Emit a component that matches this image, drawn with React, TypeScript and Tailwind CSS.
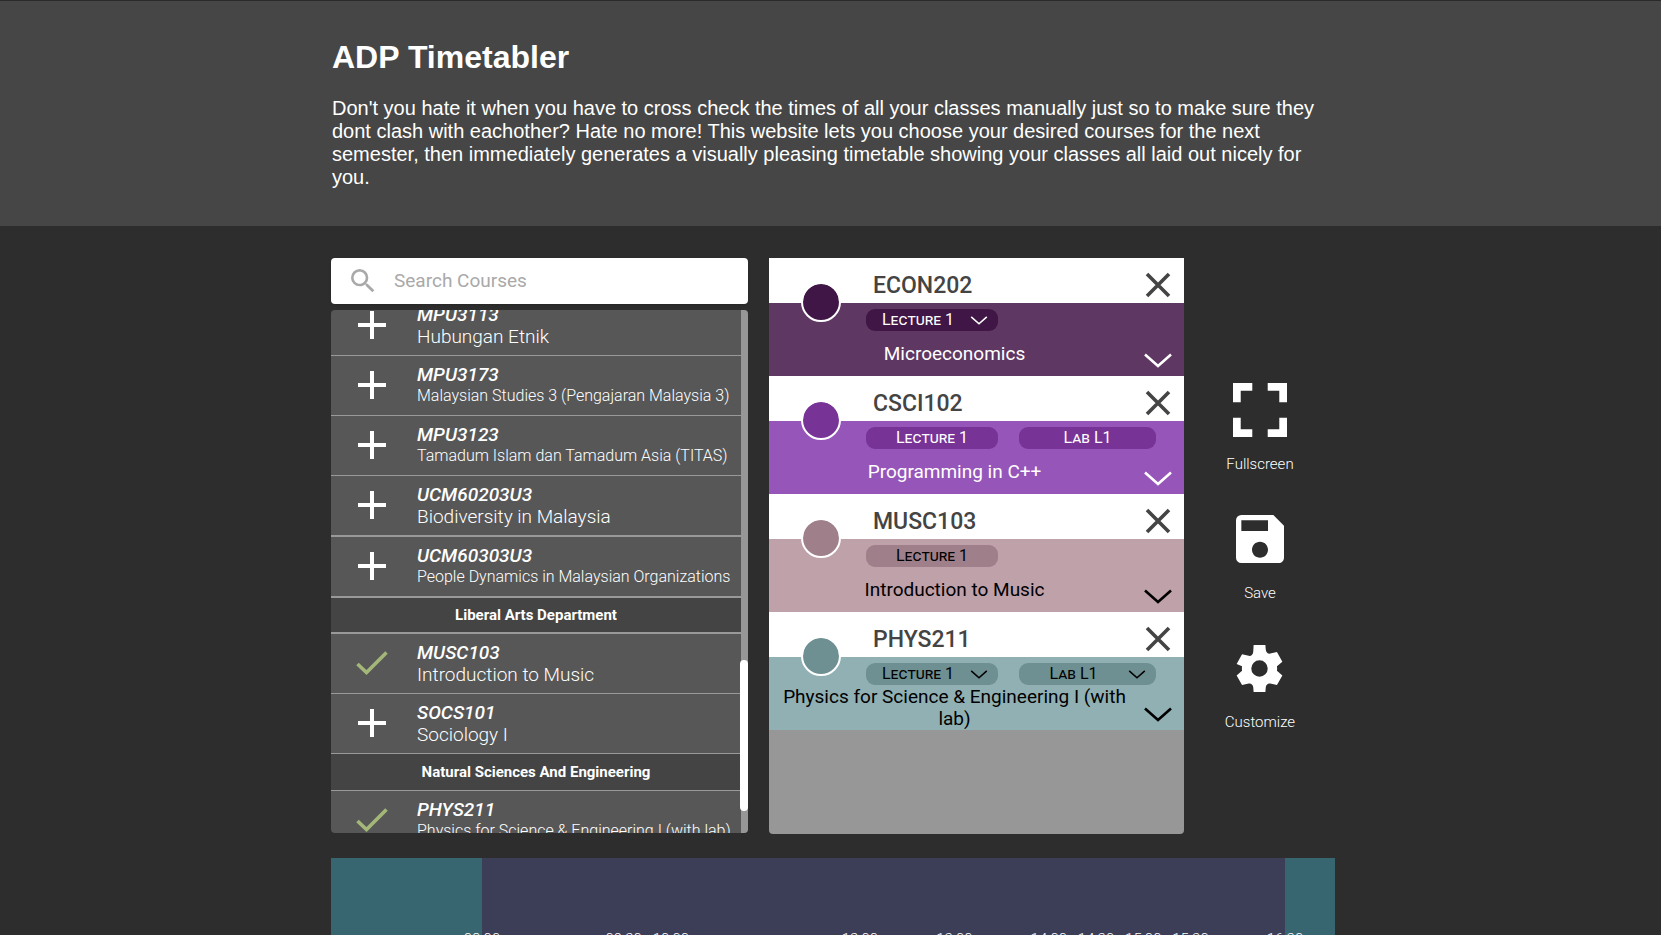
import type { ReactNode } from 'react';

type Course = { code: string; name: string; added?: boolean; small?: boolean; thick?: boolean };
type Entry = Course | { department: string; thick?: boolean };

const entries: Entry[] = [
  { code: 'MPU3113', name: 'Hubungan Etnik' },
  { code: 'MPU3173', name: 'Malaysian Studies 3 (Pengajaran Malaysia 3)', small: true },
  { code: 'MPU3123', name: 'Tamadum Islam dan Tamadum Asia (TITAS)', small: true },
  { code: 'UCM60203U3', name: 'Biodiversity in Malaysia', thick: true },
  { code: 'UCM60303U3', name: 'People Dynamics in Malaysian Organizations', small: true, thick: true },
  { department: 'Liberal Arts Department', thick: true },
  { code: 'MUSC103', name: 'Introduction to Music', added: true },
  { code: 'SOCS101', name: 'Sociology I' },
  { department: 'Natural Sciences And Engineering' },
  { code: 'PHYS211', name: 'Physics for Science & Engineering I (with lab)', added: true, small: true },
];

type Section = { label: string; menu?: boolean };
type Selected = {
  code: string;
  name: string;
  body: string;
  accent: string;
  text: string;
  sections: Section[];
};

const selected: Selected[] = [
  {
    code: 'ECON202',
    name: 'Microeconomics',
    body: 'bg-[#5f3763]',
    accent: 'bg-[#3f1645]',
    text: 'text-white',
    sections: [{ label: 'Lecture 1', menu: true }],
  },
  {
    code: 'CSCI102',
    name: 'Programming in C++',
    body: 'bg-[#9655b9]',
    accent: 'bg-[#773396]',
    text: 'text-white',
    sections: [{ label: 'Lecture 1' }, { label: 'Lab L1' }],
  },
  {
    code: 'MUSC103',
    name: 'Introduction to Music',
    body: 'bg-[#bfa1aa]',
    accent: 'bg-[#9f808a]',
    text: 'text-black',
    sections: [{ label: 'Lecture 1' }],
  },
  {
    code: 'PHYS211',
    name: 'Physics for Science & Engineering I (with lab)',
    body: 'bg-[#90b0b4]',
    accent: 'bg-[#6f9092]',
    text: 'text-black',
    sections: [{ label: 'Lecture 1', menu: true }, { label: 'Lab L1', menu: true }],
  },
];

const times = [
  { label: '08:00', hour: 8 },
  { label: '09:30', hour: 9.5 },
  { label: '10:00', hour: 10 },
  { label: '12:00', hour: 12 },
  { label: '13:00', hour: 13 },
  { label: '14:00', hour: 14 },
  { label: '14:30', hour: 14.5 },
  { label: '15:00', hour: 15 },
  { label: '15:30', hour: 15.5 },
  { label: '16:30', hour: 16.5 },
];

function Plus() {
  return (
    <svg viewBox="0 0 28 28" className="size-7" aria-hidden="true">
      <path d="M14 0v28M0 14h28" stroke="white" strokeWidth="4" />
    </svg>
  );
}

function Check() {
  return (
    <svg viewBox="0 0 32 24" className="h-6 w-8" fill="none" aria-hidden="true">
      <path d="M1.5 13L10.5 21.5L30.5 1.5" stroke="#a3b878" strokeWidth="3.6" />
    </svg>
  );
}

function Chevron({ className }: { className: string }) {
  return (
    <svg viewBox="0 0 28 15" className={className} fill="none" aria-hidden="true">
      <path d="M1 1.5L14 13L27 1.5" stroke="currentColor" strokeWidth="2.6" />
    </svg>
  );
}

function CourseRow({ course }: { course: Course }) {
  return (
    <li className={`shrink-0 border-[#999] ${course.thick ? 'h-[61px] border-b-2' : 'h-[60px] border-b'}`}>
      <button type="button" className="flex h-full w-full text-left text-white">
        <span className="flex h-full w-[82px] shrink-0 items-center justify-center pb-0.5">
          {course.added ? <Check /> : <Plus />}
        </span>
        <span className="flex flex-col pt-2 pl-1 whitespace-nowrap">
          <span className="text-[19px] leading-[22px] font-medium italic">{course.code}</span>
          <span className={`font-light ${course.small ? 'text-[16px] leading-[19px]' : 'text-[19px] leading-[22px]'}`}>
            {course.name}
          </span>
        </span>
      </button>
    </li>
  );
}

function SelectedCard({ course }: { course: Selected }) {
  return (
    <article className="relative">
      <header className="flex h-[45px] items-center justify-between bg-white pt-2 pr-[13px] pl-[104px] text-[#444]">
        <h2 className="pt-0.5 text-[23px] leading-7 font-medium">{course.code}</h2>
        <button type="button" aria-label={`Remove ${course.code}`}>
          <svg viewBox="0 0 26 26" className="size-[26px]" aria-hidden="true">
            <path d="M2 2l22 22M24 2L2 24" stroke="currentColor" strokeWidth="3.6" />
          </svg>
        </button>
      </header>
      <button
        type="button"
        aria-label={`Colour of ${course.code}`}
        className={`absolute top-6 left-8 size-10 rounded-full border-2 border-white bg-clip-padding ${course.accent}`}
      />
      <div className={`flex h-[73px] flex-col pt-[6px] ${course.body} ${course.text}`}>
        <div className="flex gap-[21px] pl-[97px]">
          {course.sections.map((s, i) => (
            <button
              key={s.label}
              type="button"
              className={`flex h-[22px] items-center rounded-[9px] text-[16px] leading-[22px] ${i ? 'w-[137px]' : 'w-[132px]'} ${course.accent}`}
            >
              <span className="flex-1 text-center [font-variant:small-caps]">{s.label}</span>
              {s.menu && <Chevron className="mr-[10px] h-[9px] w-[18px]" />}
            </button>
          ))}
        </div>
        <div className="flex flex-1 items-center pr-3">
          <p className="flex-1 pr-3 pl-2 text-center text-[19px] leading-[22px]">{course.name}</p>
          <button type="button" aria-label={`Details of ${course.code}`} className="pt-[14px]">
            <Chevron className="h-[15px] w-7" />
          </button>
        </div>
      </div>
    </article>
  );
}

function Action({ label, children }: { label: string; children: ReactNode }) {
  return (
    <button type="button" className="flex h-[129px] flex-col items-center text-white">
      <span className="flex h-[54px] items-center">{children}</span>
      <span className="mt-[18px] text-[15px] leading-[18px] font-light">{label}</span>
    </button>
  );
}

export default function App() {
  return (
    <div className="flex h-screen flex-col overflow-hidden border-t border-[#2a2a2a] bg-[#2d2d2d] font-[Roboto,sans-serif]">
      <header className="shrink-0 bg-[#464646] pl-[5px] text-white">
        <div className="mx-auto max-w-[1004px] pt-9 pr-4 pb-[37px] pl-px font-['Liberation_Sans',Arial,sans-serif]">
          <h1 className="text-[32px] leading-10 font-bold">ADP Timetabler</h1>
          <p className="mt-5 text-[20px] leading-[23px]">
            Don't you hate it when you have to cross check the times of all your classes manually just so to make sure
            they dont clash with eachother? Hate no more! This website lets you choose your desired courses for the
            next semester, then immediately generates a visually pleasing timetable showing your classes all laid out
            nicely for you.
          </p>
        </div>
      </header>
      <main className="pl-[5px]">
        <div className="mx-auto max-w-[1004px] pt-8">
          <div className="flex">
            <section className="flex h-[575px] w-[417px] flex-col" aria-label="Courses">
              <label className="flex h-[46px] shrink-0 items-center rounded bg-white pl-5 shadow">
                <svg viewBox="3 3 18 18" className="size-6" fill="#a9a9a9" aria-hidden="true">
                  <path d="M15.5 14h-.79l-.28-.27A6.471 6.471 0 0 0 16 9.5 6.5 6.5 0 1 0 9.5 16c1.61 0 3.09-.59 4.23-1.57l.27.28v.79l5 4.99L20.49 19l-4.99-5zm-6 0C7.01 14 5 11.99 5 9.5S7.01 5 9.5 5 14 7.01 14 9.5 11.99 14 9.5 14z" />
                </svg>
                <input
                  type="text"
                  placeholder="Search Courses"
                  aria-label="Search Courses"
                  className="ml-[19px] min-w-0 flex-1 text-[19px] text-[#444] outline-none placeholder:text-[#a9a9a9]"
                />
              </label>
              <div className="mt-[6px] flex min-h-0 flex-1 overflow-hidden rounded bg-[#575757]">
                <ul className="-mt-[14px] flex min-w-0 flex-1 flex-col">
                  {entries.map((e) =>
                    'department' in e ? (
                      <li
                        key={e.department}
                        className={`flex shrink-0 items-center justify-center border-[#999] bg-[#444] text-[15px] font-bold text-white ${e.thick ? 'h-9 border-b-2' : 'h-[37px] border-b'}`}
                      >
                        {e.department}
                      </li>
                    ) : (
                      <CourseRow key={e.code} course={e} />
                    ),
                  )}
                </ul>
                <div className="w-[7px] bg-[#979797] pt-[350px]">
                  <div className="-ml-px h-[151px] w-2 rounded bg-white" />
                </div>
              </div>
            </section>
            <section className="ml-[21px] h-[576px] w-[415px] overflow-hidden rounded-b bg-[#979797]" aria-label="Selected courses">
              {selected.map((c) => (
                <SelectedCard key={c.code} course={c} />
              ))}
            </section>
            <nav className="flex flex-1 flex-col items-center pt-[125px] pl-px" aria-label="Timetable actions">
              <Action label="Fullscreen">
                <svg viewBox="5 5 14 14" className="size-[54px]" fill="currentColor" aria-hidden="true">
                  <path d="M7 14H5v5h5v-2H7v-3zm-2-4h2V7h3V5H5v5zm12 7h-3v2h5v-5h-2v3zM14 5v2h3v3h2V5h-5z" />
                </svg>
              </Action>
              <Action label="Save">
                <svg viewBox="3 3 18 18" className="size-12" fill="currentColor" aria-hidden="true">
                  <path d="M17 3H5a2 2 0 0 0-2 2v14a2 2 0 0 0 2 2h14c1.1 0 2-.9 2-2V7l-4-4zm-5 16c-1.66 0-3-1.34-3-3s1.34-3 3-3 3 1.34 3 3-1.34 3-3 3zm3-10H5V5h10v4z" />
                </svg>
              </Action>
              <Action label="Customize">
                <svg viewBox="2 2 20 20" className="size-[47px]" fill="currentColor" aria-hidden="true">
                  <path d="M12 15.5a3.5 3.5 0 1 1 0-7 3.5 3.5 0 0 1 0 7m7.43-2.53c.04-.32.07-.64.07-.97s-.03-.66-.07-1l2.3-1.9-2.3-4.1-2.87.65q-.8.2-1.3-.4-.6-.5-.6-1.3L14.5 2h-5l-.16 2.92q0 .8-.6 1.3-.5.6-1.3.4l-2.87-.65-2.3 4.1L4.57 11c-.04.34-.07.67-.07 1s.03.65.07.97l-2.3 1.96 2.3 4.1 2.87-.65q.8-.2 1.3.4.6.5.6 1.3L9.5 22h5l.16-1.92q0-.8.6-1.3.5-.6 1.3-.4l2.87.65 2.3-4.1z" />
                </svg>
              </Action>
            </nav>
          </div>
          <section className="mt-6 flex h-[480px] bg-[#386670]" aria-label="Timetable">
            <div className="w-[151px]" />
            <div className="relative flex-1 bg-[#3c3e58]">
              {times.map((t) => (
                <span
                  key={t.label}
                  className="absolute top-[72px] -translate-x-1/2 text-[15px] leading-[18px] font-light text-white"
                  style={{ left: `${((t.hour - 8) / 8.5) * 100}%` }}
                >
                  {t.label}
                </span>
              ))}
            </div>
            <div className="w-[50px]" />
          </section>
        </div>
      </main>
    </div>
  );
}
